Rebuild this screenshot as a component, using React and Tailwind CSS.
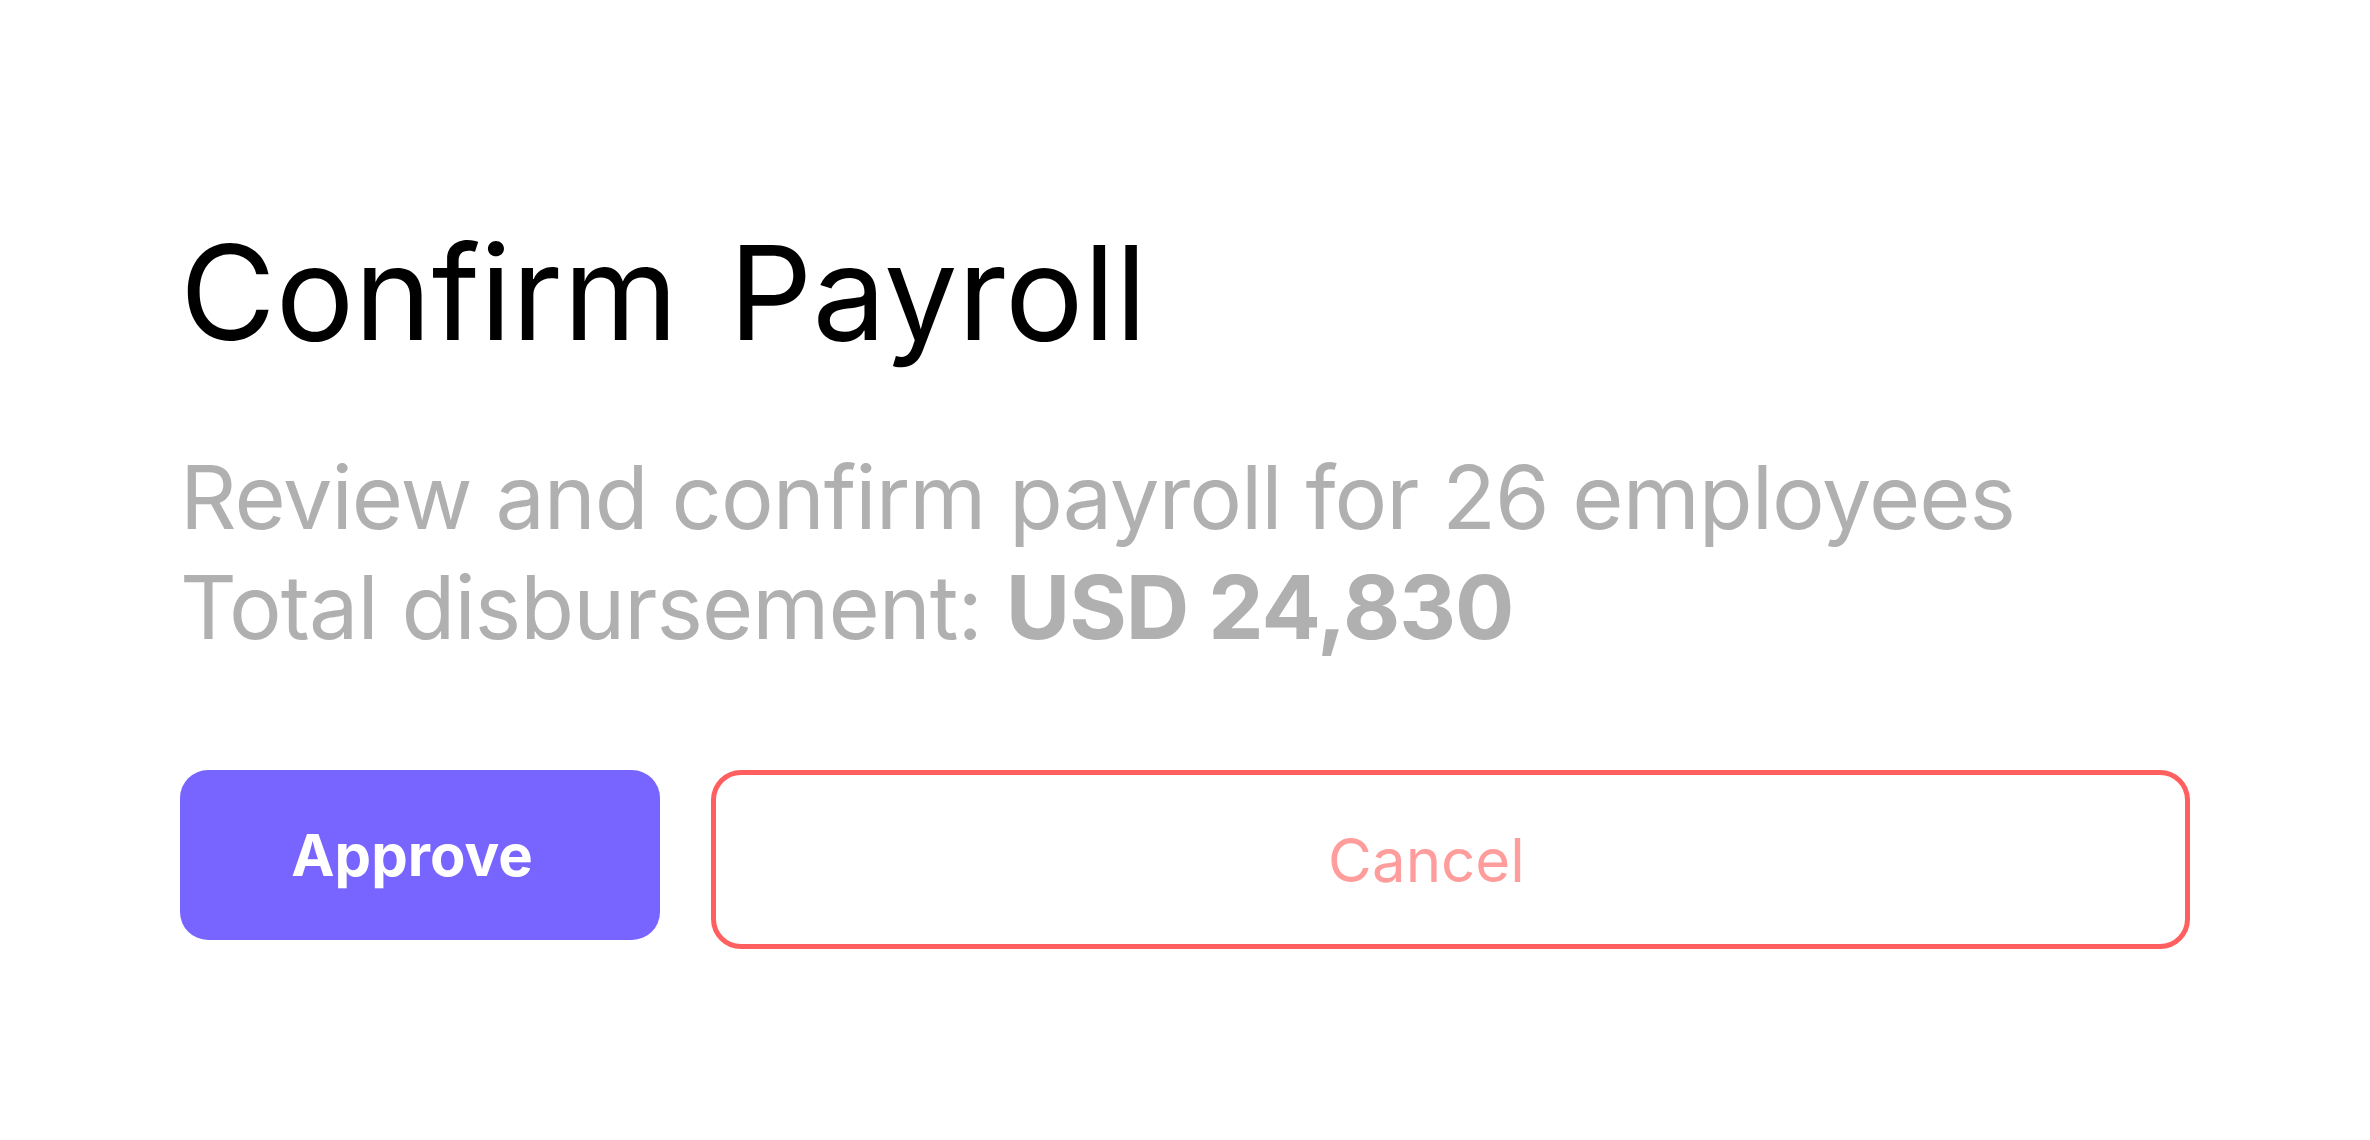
import React from "react";

const ConfirmPayroll = () => {
    return (
        <div className="min-h-screen w-full bg-white px-[180px] pt-[227px] font-['Inter',sans-serif]">
            <h1 className="text-[131px] font-normal leading-none tracking-normal [word-spacing:14px] text-black">Confirm Payroll</h1>
            <div className="mt-[84px] text-[88px] leading-[110px] tracking-[-0.011em] text-[#b0b0b0]">
                <p>Review and confirm payroll for 26 employees</p>
                <p>
                    Total disbursement: <span className="font-bold">USD 24,830</span>
                </p>
            </div>
            <div className="mt-[108px] flex items-start gap-[51px]">
                <button className="flex h-[170px] w-[480px] items-center justify-center rounded-[28px] bg-[#7864ff] pr-4 text-[58px] font-bold text-white">
                    Approve
                </button>
                <button className="flex h-[179px] flex-1 items-center justify-center rounded-[30px] border-[5px] border-[#ff5f5f] bg-white pr-12 text-[60px] text-[#ff9d9d]">
                    Cancel
                </button>
            </div>
        </div>
    );
};

export default function App() {
    return <ConfirmPayroll />;
}
